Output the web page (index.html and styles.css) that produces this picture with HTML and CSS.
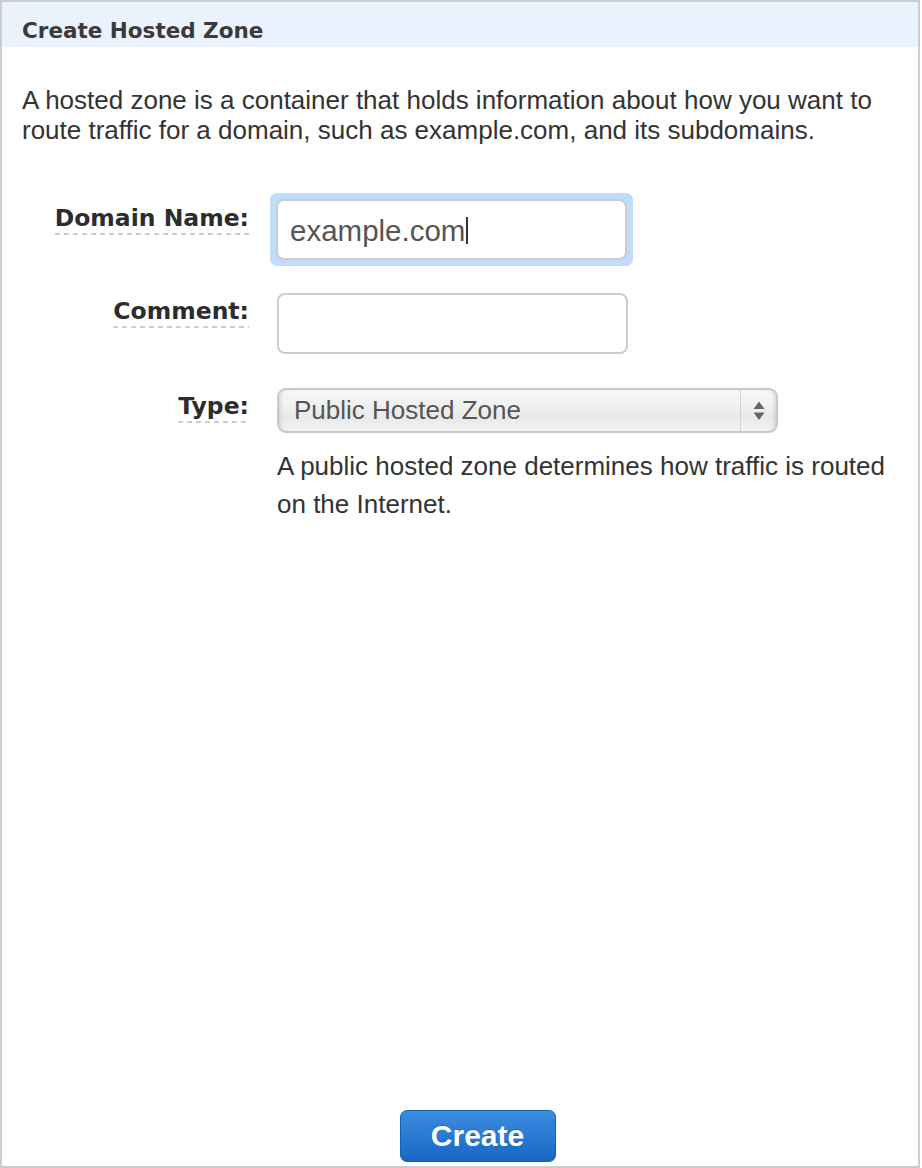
FILE: index.html
```html
<!DOCTYPE html>
<html>
<head>
<meta charset="utf-8">
<link rel="stylesheet" href="styles.css">
</head>
<body>
<div class="panel">
  <div class="panel-header">Create Hosted Zone</div>
  <div class="panel-body">
    <p class="intro">A hosted zone is a container that holds information about how you want to route traffic for a domain, such as example.com, and its subdomains.</p>
    <div class="form">
      <div class="label-cell"><span class="label">Domain Name:</span></div>
      <div class="field-cell">
        <div class="focus-ring"><div class="input">example.com<span class="caret"></span></div></div>
      </div>
      <div class="label-cell"><span class="label">Comment:</span></div>
      <div class="field-cell"><div class="input"></div></div>
      <div class="label-cell"><span class="label">Type:</span></div>
      <div class="field-cell field-last">
        <div class="select">
          <span class="select-text">Public Hosted Zone</span>
          <span class="select-arrows">
            <svg width="12" height="22" viewBox="0 0 12 22"><path d="M6 1.5 L11.5 9 L0.5 9 Z" fill="#666"/><path d="M0.5 12.5 L11.5 12.5 L6 20 Z" fill="#666"/></svg>
          </span>
        </div>
        <p class="help">A public hosted zone determines how traffic is routed on the Internet.</p>
      </div>
    </div>
    <div class="spacer"></div>
    <div class="actions"><button class="btn-create">Create</button></div>
  </div>
</div>
</body>
</html>
```
FILE: styles.css
```css
html, body {
  margin: 0;
  padding: 0;
  background: #fff;
}
body {
  width: 922px;
  height: 1168px;
}
.panel {
  box-sizing: border-box;
  width: 920px;
  height: 1168px;
  border: 2px solid #cccccc;
  display: flex;
  flex-direction: column;
}
.panel-header {
  box-sizing: border-box;
  height: 45px;
  background: #eaf2fd;
  font-family: "DejaVu Sans", Verdana, sans-serif;
  font-weight: bold;
  font-size: 21.5px;
  line-height: 25px;
  color: #3a3a3a;
  padding: 16px 0 0 20px;
}
.panel-body {
  flex: 1;
  display: flex;
  flex-direction: column;
  padding: 0 20px 4px 20px;
}
.intro {
  margin: 38px 0 0 0;
  font-family: "Liberation Sans", Arial, sans-serif;
  font-size: 26px;
  line-height: 30px;
  color: #333;
}
.form {
  margin-top: 55px;
  display: grid;
  grid-template-columns: 227px 1fr;
  column-gap: 28px;
}
.label-cell {
  text-align: right;
  padding-top: 4px;
}
.label {
  display: inline-block;
  font-family: "DejaVu Sans", Verdana, sans-serif;
  font-weight: bold;
  font-size: 23.5px;
  line-height: 28px;
  color: #2c2c2c;
  padding-bottom: 3px;
  background-image: linear-gradient(to right, #cccccc 5px, transparent 5px);
  background-size: 9px 2px;
  background-repeat: repeat-x;
  background-position: left bottom;
}
.field-cell {
  padding-bottom: 34px;
}
.field-last {
  padding-bottom: 0;
}
.focus-ring {
  margin: -7px 0 -7px -7px;
  width: 351px;
  padding: 6px;
  border-radius: 7px;
  background: #c0dcfb;
}
.input {
  box-sizing: border-box;
  width: 351px;
  height: 61px;
  border: 2px solid #cccccc;
  border-radius: 8px;
  background: #fff;
  font-family: "Liberation Sans", Arial, sans-serif;
  font-size: 29.5px;
  color: #555;
  padding: 2px 0 0 12px;
  display: flex;
  align-items: center;
}
.caret {
  display: inline-block;
  width: 1.5px;
  height: 27px;
  background: #333;
  margin-left: 1px;
}
.select {
  box-sizing: border-box;
  width: 501px;
  height: 45px;
  border: 2px solid #c9c9c9;
  border-radius: 9px;
  background: linear-gradient(#f8f8f8 0%, #ececec 55%, #e9e9e9 70%, #f4f4f4 100%);
  box-shadow: inset 4px 0 4px -3px rgba(0,0,0,0.15), inset -4px 0 4px -3px rgba(0,0,0,0.15);
  display: flex;
  align-items: center;
  font-family: "Liberation Sans", Arial, sans-serif;
  font-size: 26px;
  color: #555;
}
.select-text {
  flex: 1;
  padding-left: 15px;
}
.select-arrows {
  width: 35px;
  height: 41px;
  border-left: 1px solid #d2d2d2;
  display: flex;
  align-items: center;
  justify-content: center;
}
.help {
  margin: 14px 0 0 0;
  font-family: "Liberation Sans", Arial, sans-serif;
  font-size: 26px;
  line-height: 38px;
  color: #333;
}
.spacer {
  flex: 1;
}
.actions {
  display: flex;
  justify-content: center;
  padding-left: 35px;
}
.btn-create {
  width: 156px;
  height: 52px;
  border: 1px solid #1b5fae;
  border-radius: 7px;
  background: linear-gradient(#3a8ee2, #1866c2);
  color: #fff;
  font-family: "Liberation Sans", Arial, sans-serif;
  font-weight: bold;
  font-size: 30px;
  line-height: 1;
  padding: 0;
  text-shadow: 0 -1px 0 rgba(0,0,0,0.2);
  cursor: pointer;
}
```
